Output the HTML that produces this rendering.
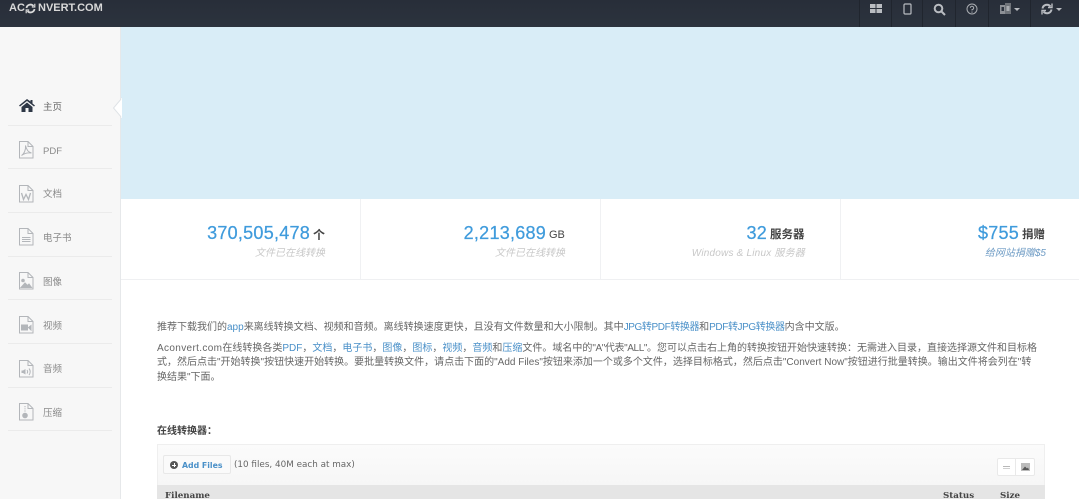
<!DOCTYPE html>
<html lang="zh"><head><meta charset="utf-8"><title>Aconvert</title>
<style>
*{box-sizing:border-box}
html,body{margin:0;padding:0;width:1079px;height:499px;overflow:hidden;background:#fff}
body{font-family:"Liberation Sans","Noto Sans CJK SC",sans-serif;color:#555;position:relative;filter:blur(.3px)}
.a{position:absolute;white-space:nowrap}
a{color:#4a90c8;text-decoration:none}
#top{left:0;top:0;width:1079px;height:27px;background:linear-gradient(#282e39,#2c333e)}
.sep{position:absolute;top:0;width:1px;height:27px;background:#20252e}
#side{left:0;top:27px;width:121px;height:472px;background:#f7f7f7;border-right:1px solid #e6e8ea}
.hr{position:absolute;left:8px;width:104px;height:1px;background:#ebebeb}
.lab{position:absolute;left:43px;font-size:9.5px;color:#8a8a8a;line-height:12px}
.ic{position:absolute;left:18px}
.num{font-size:18px;color:#3f9bdc;letter-spacing:.25px;line-height:22px;-webkit-text-stroke:.25px #3f9bdc}
.unit{font-size:11.5px;color:#444;line-height:14px}
.sub{font-size:10px;color:#c8c8c8;font-style:italic;line-height:13px;text-align:right}
.t{font-size:10px;line-height:13px;color:#666}
.v{position:absolute;top:199px;width:1px;height:80px;background:#f0f1f3}
.th{font-family:"DejaVu Serif",serif;font-size:8.7px;font-weight:bold;color:#444;line-height:12px}
</style></head><body>
<div class="a" id="top">
<div class="a" style="left:9px;top:1px;font-size:11px;font-weight:bold;color:#d8d8d8;line-height:15px">AC</div>
<svg class="a" style="left:25px;top:3px" width="11" height="11" viewBox="0 0 11 11" fill="none" stroke="#d8d8d8" stroke-width="1.8"><path d="M1.5 5A4 4 0 0 1 8.5 3M9.5 6A4 4 0 0 1 2.5 8"/><path d="M9.8 .8V4H6.8M1.2 10.2V7H4.2" stroke-width="1.2"/></svg>
<div class="a" style="left:38px;top:1px;font-size:11px;font-weight:bold;color:#d8d8d8;line-height:15px">NVERT.COM</div>
<div class="sep" style="left:859px"></div><div class="sep" style="left:891px"></div><div class="sep" style="left:922px"></div><div class="sep" style="left:955px"></div><div class="sep" style="left:988px"></div><div class="sep" style="left:1030px"></div>
<svg class="a" style="left:870px;top:3px" width="13" height="11" viewBox="0 0 13 11" fill="#b9bcc1"><rect x="0" y="1" width="5.5" height="4"/><rect x="6.5" y="1" width="5.5" height="4"/><rect x="0" y="6" width="5.5" height="4"/><rect x="6.5" y="6" width="5.5" height="4"/></svg>
<svg class="a" style="left:903px;top:3px" width="9" height="12" viewBox="0 0 9 12" fill="none" stroke="#b9bcc1" stroke-width="1.2"><rect x="1" y="1" width="7" height="10" rx="1"/></svg>
<svg class="a" style="left:933px;top:3px" width="13" height="13" viewBox="0 0 13 13" fill="none" stroke="#b9bcc1" stroke-width="2"><circle cx="5.5" cy="5.5" r="3.8"/><path d="M8.5 8.5L12 12"/></svg>
<svg class="a" style="left:966px;top:3px" width="12" height="12" viewBox="0 0 12 12" fill="none" stroke="#a9acb1" stroke-width="1"><circle cx="6" cy="6" r="5"/><path d="M4.3 4.8A1.7 1.7 0 1 1 6 6.6V7.5M6 8.5V9.7"/></svg>
<svg class="a" style="left:1000px;top:3px" width="11" height="12" viewBox="0 0 11 12"><rect x="0" y="2" width="5" height="9" fill="#8d9096"/><rect x="5" y="0" width="6" height="11" fill="#6f7379"/><rect x="1.500" y="4" width="2.500" height="4" fill="#2b323d"/><rect x="6.500" y="3" width="3" height="5" fill="#a9acb1"/></svg>
<div class="a" style="left:1014px;top:8px;border:3px solid transparent;border-top:3px solid #b9bcc1;border-bottom:0"></div>
<svg class="a" style="left:1041px;top:3px" width="12" height="12" viewBox="0 0 12 12" fill="none" stroke="#b9bcc1" stroke-width="2"><path d="M1.500 5.500A4.500 4.500 0 0 1 9.500 3.500M10.500 6.500A4.500 4.500 0 0 1 2.500 8.500"/><path d="M11 .5V4.500H7M1 11.500V7.500H5" stroke-width="1.400"/></svg>
<div class="a" style="left:1056px;top:8px;border:3px solid transparent;border-top:3px solid #b9bcc1;border-bottom:0"></div>
</div>

<div class="a" style="left:121px;top:27px;width:958px;height:172px;background:#d9edf7"></div>

<div class="a" id="side">
<svg class="ic" style="top:72px;left:19px" width="16" height="13" viewBox="0 0 16 13" fill="#2e3746"><path d="M8 0L0 6.500l1 1L8 2l7 5.500 1-1-2.500-2V1H11.500V2.500zM2.500 8L8 3.500 13.500 8v5H9.500V9H6.500v4H2.500z"/></svg>
<div class="lab" style="top:73px;color:#666;top:75px">主页</div>
<div class="hr" style="top:98px"></div>
<svg class="ic" style="top:114px" width="16" height="18" viewBox="0 0 16 18" fill="none" stroke="#b3b6ba" stroke-width="1"><path d="M1.500.5H10L15 5.500V17H1.500zM10 .5V5.500H15M3.500 14.500C6 13 8 9 7.500 4.500 8.500 9 11 11.500 13.500 12 10 11.500 6 12.500 3.500 14.500Z"/></svg>
<div class="lab" style="top:119px">PDF</div>
<div class="hr" style="top:141px"></div>
<svg class="ic" style="top:158px" width="16" height="18" viewBox="0 0 16 18" fill="none" stroke="#b3b6ba" stroke-width="1"><path d="M1.500.5H10L15 5.500V17H1.500zM10 .5V5.500H15"/><path d="M3.500 8L5.500 14.500 8 9.500 10.500 14.500 12.500 8" stroke-width="1.300"/></svg>
<div class="lab" style="top:162px">文档</div>
<div class="hr" style="top:185px"></div>
<svg class="ic" style="top:201px" width="16" height="18" viewBox="0 0 16 18" fill="none" stroke="#b3b6ba" stroke-width="1"><path d="M1.500.5H10L15 5.500V17H1.500zM10 .5V5.500H15M4 9.500H12.500M4 11.500H12.500M4 13.500H12.500"/></svg>
<div class="lab" style="top:206px">电子书</div>
<div class="hr" style="top:229px"></div>
<svg class="ic" style="top:245px" width="16" height="18" viewBox="0 0 16 18" fill="none" stroke="#b3b6ba" stroke-width="1"><path d="M1.500.5H10L15 5.500V17H1.500zM10 .5V5.500H15"/><path d="M3 15.500L7 11l2.500 2.500 1.500-1.500 2.500 3.500z" fill="#b3b6ba"/><circle cx="5" cy="8.500" r="1.300" fill="#b3b6ba"/></svg>
<div class="lab" style="top:250px">图像</div>
<div class="hr" style="top:272px"></div>
<svg class="ic" style="top:289px" width="16" height="18" viewBox="0 0 16 18" fill="none" stroke="#b3b6ba" stroke-width="1"><path d="M1.500.5H10L15 5.500V17H1.500zM10 .5V5.500H15"/><rect x="3.500" y="9" width="6" height="5" fill="#b3b6ba"/><path d="M10.500 11.500L13 9.500V14z" fill="#b3b6ba"/></svg>
<div class="lab" style="top:294px">视频</div>
<div class="hr" style="top:316px"></div>
<svg class="ic" style="top:333px" width="16" height="18" viewBox="0 0 16 18" fill="none" stroke="#b3b6ba" stroke-width="1"><path d="M1.500.5H10L15 5.500V17H1.500zM10 .5V5.500H15M9 10a3 3 0 0 1 0 3.500M11 8.500a5 5 0 0 1 0 6.500"/><path d="M3.500 10.500H5L7.500 9V14.500L5 13H3.500z" fill="#b3b6ba" stroke="none"/></svg>
<div class="lab" style="top:337px">音频</div>
<div class="hr" style="top:360px"></div>
<svg class="ic" style="top:376px" width="16" height="18" viewBox="0 0 16 18" fill="none" stroke="#b3b6ba" stroke-width="1"><path d="M1.500.5H10L15 5.500V17H1.500zM10 .5V5.500H15"/><path d="M7 3V9" stroke-dasharray="1.200 1"/><circle cx="7" cy="12.500" r="2.300" fill="#b3b6ba"/></svg>
<div class="lab" style="top:381px">压缩</div>
<div class="hr" style="top:403px"></div>
</div>
<svg class="a" style="left:112px;top:97px" width="10" height="22" viewBox="0 0 10 22"><path d="M10 1L1.500 11 10 21z" fill="#fff" stroke="#dfe3e6"/><path d="M10 1V21" stroke="#fff" stroke-width="1.500"/></svg>

<div class="a" style="left:121px;top:279px;width:958px;height:1px;background:#eff0f2"></div>
<div class="v" style="left:360px"></div><div class="v" style="left:600px"></div><div class="v" style="left:840px"></div>

<div class="a num" style="right:769px;top:222px">370,505,478</div>
<div class="a unit" style="left:313px;top:228px;font-size:12px;font-weight:bold">个</div>
<div class="a sub" style="right:754px;top:247px">文件已在线转换</div>
<div class="a num" style="right:533px;top:222px">2,213,689</div>
<div class="a unit" style="left:549px;top:228px;font-size:11px">GB</div>
<div class="a sub" style="right:514px;top:247px">文件已在线转换</div>
<div class="a num" style="right:312px;top:222px">32</div>
<div class="a unit" style="left:770px;top:228px;font-weight:bold;font-size:11.500px">服务器</div>
<div class="a sub" style="right:274px;top:247px;letter-spacing:.2px">Windows &amp; Linux 服务器</div>
<div class="a num" style="right:60px;top:222px">$755</div>
<div class="a unit" style="left:1022px;top:228px;font-weight:bold;font-size:11.500px">捐赠</div>
<div class="a sub" style="right:33px;top:247px;color:#6f9cc5">给网站捐赠$5</div>

<div class="a t" style="left:157px;top:321px">推荐下载我们的<a>app</a>来离线转换文档、视频和音频。离线转换速度更快，且没有文件数量和大小限制。其中<a style="letter-spacing:-.4px">JPG转PDF转换器</a>和<a style="letter-spacing:-.4px">PDF转JPG转换器</a>内含中文版。</div>
<div class="a t" style="left:157px;top:342px"><span style="letter-spacing:.35px">Aconvert.com</span>在线转换各类<a>PDF</a>，<a>文档</a>，<a>电子书</a>，<a>图像</a>，<a>图标</a>，<a>视频</a>，<a>音频</a>和<a>压缩</a>文件。域名中的<span style="letter-spacing:-.4px">"A"代表"ALL"</span>。您可以点击右上角的转换按钮开始快速转换：无需进入目录，直接选择源文件和目标格</div>
<div class="a t" style="left:157px;top:356px">式，然后点击"开始转换"按钮快速开始转换。要批量转换文件，请点击下面的"Add Files"按钮来添加一个或多个文件，选择目标格式，然后点击"Convert Now"按钮进行批量转换。输出文件将会列在"转</div>
<div class="a t" style="left:157px;top:371px">换结果"下面。</div>

<div class="a" style="left:157px;top:425px;font-size:10px;font-weight:bold;line-height:14px;color:#444">在线转换器：</div>

<div class="a" style="left:157px;top:444px;width:888px;height:42px;background:linear-gradient(#fbfbfb,#f6f6f6);border:1px solid #efefef;border-bottom:0"></div>
<div class="a" style="left:163px;top:455px;width:68px;height:19px;background:#fafafa;border:1px solid #e8e8e8;border-radius:2px"></div>
<div class="a" style="left:170px;top:461px;width:8px;height:8px;border-radius:50%;background:#555"></div>
<div class="a" style="left:172px;top:464.500px;width:4px;height:1px;background:#fff"></div>
<div class="a" style="left:173.500px;top:463px;width:1px;height:4px;background:#fff"></div>
<div class="a" style="left:182px;top:460px;font-family:'DejaVu Sans',sans-serif;font-size:7.800px;font-weight:bold;color:#4a90c8;line-height:12px">Add Files</div>
<div class="a" style="left:234px;top:459px;font-family:'DejaVu Sans',sans-serif;font-size:8.800px;color:#666;line-height:13px">(10 files, 40M each at max)</div>

<div class="a" style="left:997px;top:458px;width:38px;height:18px;background:#fff;border:1px solid #e9e9e9;border-radius:2px"></div>
<div class="a" style="left:1015px;top:458px;width:1px;height:18px;background:#e9e9e9"></div>
<div class="a" style="left:1003px;top:466px;width:7px;height:1px;background:#b8b8b8"></div>
<div class="a" style="left:1003px;top:468px;width:7px;height:1px;background:#d0d0d0"></div>
<svg class="a" style="left:1021px;top:463px" width="9" height="8" viewBox="0 0 9 8"><rect width="9" height="8" fill="#bbb"/><path d="M1 7L4 3.500 6 5.500 7 4.500 8 7z" fill="#555"/></svg>

<div class="a" style="left:157px;top:485px;width:888px;height:14px;background:#e5e5e5"></div>
<div class="a th" style="left:165px;top:490px">Filename</div>
<div class="a th" style="left:943px;top:490px">Status</div>
<div class="a th" style="left:1000px;top:490px">Size</div>
</body></html>
